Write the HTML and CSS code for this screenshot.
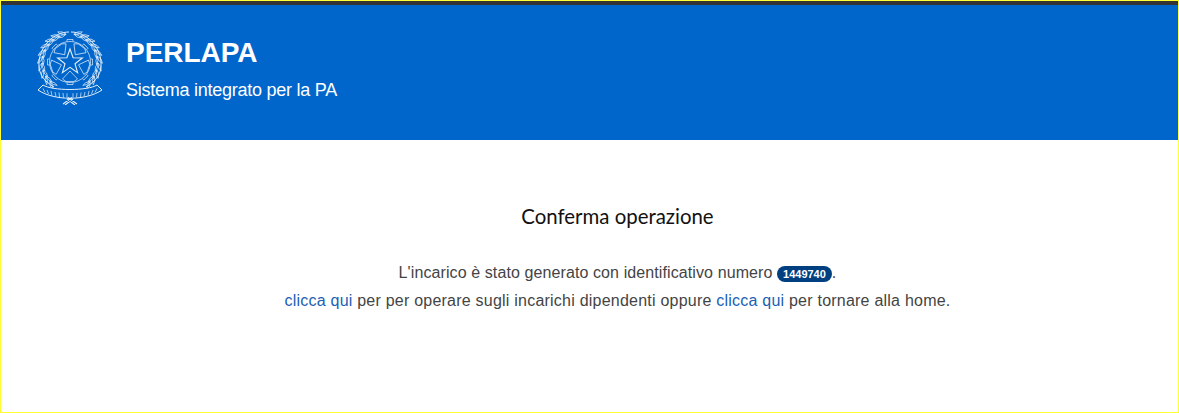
FILE: index.html
```html
<!DOCTYPE html>
<html>
<head>
	<meta charset="utf-8">
	<title>PERLAPA</title>
	<link rel="stylesheet" href="styles.css">
</head>

<body>
	<div class="page">
		<div class="topbar"></div>
		<header class="header">
			<svg class="emblem" viewBox="0 0 68 76" fill="none" stroke="#fff" stroke-width="0.7">
				<defs>
					<!-- one pair of leaves, rotated round the centre for the wreath -->
					<path id="leaf" d="M34 5Q37 1 42 1.500Q40 5 34 5ZM34 5Q39 4.500 42 7.500Q38 8.500 34 5Z"/>
					<!-- one window of the gear between two star points -->
					<path id="window" d="M34 24L41.500 16L38 13.500H30L26.500 16Z"/>
					<path id="tooth" d="M31 12.500V10.500H37V12.500"/>
				</defs>
				<g id="branch">
					<path d="M35 3C50 3 64 17 65 33C66 45 60 52 50 58" stroke-width="1"/>
					<use href="#leaf" transform="rotate(8 34 33)"/>
					<use href="#leaf" transform="rotate(22 34 33)"/>
					<use href="#leaf" transform="rotate(36 34 33)"/>
					<use href="#leaf" transform="rotate(50 34 33)"/>
					<use href="#leaf" transform="rotate(64 34 33)"/>
					<use href="#leaf" transform="rotate(78 34 33)"/>
					<use href="#leaf" transform="rotate(92 34 33)"/>
					<use href="#leaf" transform="rotate(106 34 33)"/>
					<use href="#leaf" transform="rotate(120 34 33)"/>
					<use href="#leaf" transform="rotate(134 34 33)"/>
				</g>
				<use href="#branch" transform="matrix(-1 0 0 1 68 0)"/>
				<!-- gear -->
				<circle cx="34" cy="33" r="20.500"/>
				<use href="#tooth"/>
				<use href="#tooth" transform="rotate(45 34 33)"/>
				<use href="#tooth" transform="rotate(90 34 33)"/>
				<use href="#tooth" transform="rotate(135 34 33)"/>
				<use href="#tooth" transform="rotate(180 34 33)"/>
				<use href="#tooth" transform="rotate(225 34 33)"/>
				<use href="#tooth" transform="rotate(270 34 33)"/>
				<use href="#tooth" transform="rotate(315 34 33)"/>
				<use href="#window" transform="rotate(36 34 33)"/>
				<use href="#window" transform="rotate(108 34 33)"/>
				<use href="#window" transform="rotate(180 34 33)"/>
				<use href="#window" transform="rotate(252 34 33)"/>
				<use href="#window" transform="rotate(324 34 33)"/>
				<!-- star -->
				<path d="M34 20L37.100 28.700L46.400 29L39 34.700L41.600 43.600L34 38.400L26.400 43.600L29 34.700L21.600 29L30.900 28.700Z" stroke-width="1.100"/>
				<!-- ribbon -->
				<path d="M7 56C16 62 52 62 61 56L66 61C50 72 18 72 2 61Z" fill="#0066cc" stroke-width="1"/>
				<path d="M7 59.500L9 63.500M11 61L12.500 65M15 62L16 66.500M19 63L20 67.500M23 63.500L23.500 68M27 64L27.500 68.500M31 64.300V68.500M37 64.300V68.500M41 64L40.500 68.500M45 63.500L44.500 68M49 63L48 67.500M53 62L52 66.500M57 61L55.500 65M61 59.500L59 63.500"/>
				<path d="M27 75L36 68.500M41 75L32 68.500M29 76L37 70M39 76L31 70" stroke-width="1.100"/>
			</svg>
			<div class="brand">
				<h1 class="brand-title">PERLAPA</h1>
				<p class="brand-sub">Sistema integrato per la PA</p>
			</div>
		</header>
		<main class="content">
			<h2 class="title">Conferma operazione</h2>
			<p class="msg msg-first">L'incarico è stato generato con identificativo numero <span class="badge">1449740</span>.</p>
			<p class="msg"><a href="#">clicca qui</a> per per operare sugli incarichi dipendenti oppure <a href="#">clicca qui</a> per tornare alla home.</p>
		</main>
	</div>
</body>
</html>
```

FILE: styles.css
```css
html, body {
	margin: 0;
	height: 100%;
}
.page {
	box-sizing: border-box;
	height: 413px;
	border: 1px solid #ffff33;
	background: #fff;
	overflow: hidden;
}
.topbar {
	height: 4px;
	background: #333;
}
.header {
	height: 135px;
	background: #0066cc;
	color: #fff;
	display: flex;
	align-items: flex-start;
	padding: 24px 0 0 35px;
	box-sizing: border-box;
}
.emblem {
	width: 68px;
	height: 76px;
	opacity: 0.9;
	filter: blur(0.35px);
}
.brand {
	margin-left: 22px;
	padding-top: 2px;
	font-family: "Liberation Sans", Arial, sans-serif;
}
.brand-title {
	margin: 0;
	font-size: 28px;
	line-height: 44px;
	font-weight: 700;
	letter-spacing: -0.05px;
}
.brand-sub {
	margin: 0;
	font-size: 18px;
	line-height: 30px;
	letter-spacing: -0.25px;
}
.content {
	text-align: center;
	padding: 61px 0 0 56px;
	font-family: "Liberation Sans", Arial, sans-serif;
	color: #444;
}
.title {
	margin: 0 0 28px;
	font-family: Lato, sans-serif;
	font-size: 20.4px;
	line-height: 30px;
	font-weight: 400;
	color: #111;
}
.msg {
	margin: 0;
	font-size: 16px;
	line-height: 27px;
	letter-spacing: 0.225px;
}
.msg-first {
	letter-spacing: 0.1px;
	padding-bottom: 1px;
}
.msg a {
	color: #1a5fb4;
	text-decoration: none;
}
.badge {
	display: inline-block;
	padding: 0 6px;
	background: #004080;
	color: #fff;
	border-radius: 8px;
	font-size: 11px;
	line-height: 16px;
	font-weight: 700;
	letter-spacing: 0;
}
```
